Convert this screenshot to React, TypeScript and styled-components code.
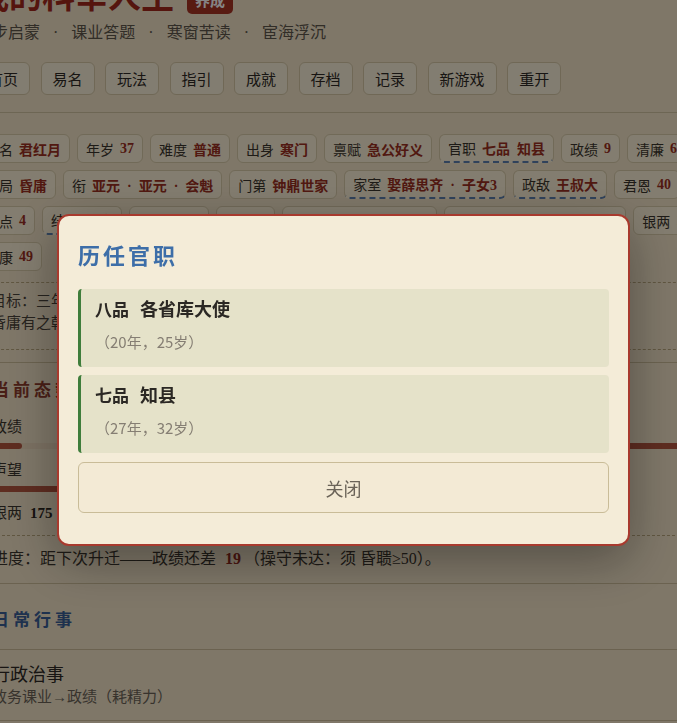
import styled, { createGlobalStyle } from 'styled-components';

const GlobalStyle = createGlobalStyle`
  html, body {
    margin: 0;
    padding: 0;
    overflow: hidden;
    background: #f3e4c8;
  }
  body {
    font-family: "Liberation Serif", "Noto Sans CJK SC", serif;
    color: #2e2a25;
  }
  * { box-sizing: border-box; }
`;

const Main = styled.main`
  width: 740px;
  margin: -23px 0 0 -24px;
`;

const TitleRow = styled.div`
  display: flex;
  align-items: center;
  height: 40px;
`;

const Title = styled.h1`
  margin: 0;
  font-size: 33px;
  line-height: 40px;
  font-weight: 700;
  color: #a4291c;
`;

const Badge = styled.span`
  margin-left: 13px;
  padding: 0 8px;
  height: 26px;
  line-height: 26px;
  border-radius: 5px;
  background: #a93424;
  color: #fff;
  font-size: 15px;
  font-weight: 700;
  transform: translateY(4px);
`;

const Subtitle = styled.div`
  margin-top: 5px;
  display: flex;
  align-items: center;
  font-size: 16px;
  line-height: 22px;
  color: #5e564b;
`;

const Dot = styled.span`
  margin: 0 13px;
`;

const Nav = styled.nav`
  display: flex;
  gap: 10.5px;
  margin-top: 18px;
  padding-bottom: 17px;
  border-bottom: 1px solid #d2c3a2;
`;

const NavButton = styled.button`
  height: 33px;
  padding: 0 11px;
  border: 1px solid #d6c8a6;
  border-radius: 6px;
  background: #f9efd9;
  font: inherit;
  font-size: 15px;
  color: #2e2a25;
`;

const Stats = styled.div`
  display: flex;
  flex-direction: column;
  gap: 7px;
  margin-top: 21px;
`;

const StatRow = styled.div`
  display: flex;
  gap: 7px;
  white-space: pre;
`;

const Chip = styled.div<{ $linked?: boolean }>`
  display: flex;
  align-items: center;
  gap: 6px;
  height: 29px;
  padding: 0 8px;
  border: 1px solid #d9cba9;
  border-bottom: ${(p) => (p.$linked ? '2px dashed #5c7fae' : '1px solid #d9cba9')};
  border-radius: 6px;
  background: #fcf0d6;
  font-size: 14px;
  color: #3b352d;
`;

const ChipValue = styled.b`
  color: #9b2f21;
  font-weight: 700;
`;

const Goal = styled.div`
  margin-top: 11px;
  padding: 7px 15px 15px;
  border-top: 1px dashed #b9a67d;
  border-bottom: 1px dashed #b9a67d;
  font-size: 15px;
  line-height: 22px;
  color: #4a433a;
  white-space: nowrap;
`;

const Section = styled.section<{ $flush?: boolean }>`
  margin-top: ${(p) => (p.$flush ? '0' : '12px')};
  padding: 0 16px;
  border-top: 1px solid #cdbd99;
`;

const SectionHead = styled.h2<{ $tone: string; $space: number }>`
  margin: 0;
  padding-top: ${(p) => p.$space}px;
  font-size: 17px;
  line-height: 24px;
  font-weight: 700;
  letter-spacing: 4px;
  color: ${(p) => p.$tone};
`;

const MeterGrid = styled.div`
  display: grid;
  grid-template-columns: 330px 1fr;
  column-gap: 24px;
  margin-top: 14px;
`;

const Meter = styled.div`
  margin-bottom: 11px;
`;

const MeterLabel = styled.div`
  font-size: 15px;
  line-height: 20px;
  color: #3b352d;
`;

const Track = styled.div`
  margin-top: 6px;
  height: 6px;
  border-radius: 3px;
  background: rgba(160, 90, 60, 0.08);
  overflow: hidden;
`;

const Fill = styled.div`
  height: 100%;
  border-radius: 3px;
  background: #b4563f;
`;

const Money = styled.div`
  padding-bottom: 12px;
  border-bottom: 1px dashed #b9a67d;
  font-size: 15px;
  line-height: 20px;
  color: #3b352d;

  b {
    margin-left: 8px;
    font-size: 15px;
    color: #2a241d;
  }
`;

const Progress = styled.p`
  margin: 11px 0 0;
  padding-bottom: 12px;
  font-size: 16px;
  line-height: 24px;
  color: #3b352d;

  b {
    margin: 0 3px 0 9px;
    color: #8f2a1d;
  }
`;

const HeadBar = styled.div`
  padding-bottom: 16px;
  border-bottom: 1px solid #cdbd99;
`;

const Action = styled.div`
  padding: 13px 0 13px;
  border-bottom: 1px solid #cdbd99;
`;

const ActionName = styled.div`
  font-size: 18px;
  line-height: 24px;
  color: #2e2a25;
`;

const ActionNote = styled.div`
  font-size: 15px;
  line-height: 20px;
  color: #6b6357;
`;

const Overlay = styled.div`
  position: fixed;
  inset: 0;
  display: flex;
  justify-content: center;
  align-items: flex-start;
  padding: 214px 0 0 10px;
  background: rgba(0, 0, 0, 0.48);
`;

const Dialog = styled.div`
  width: 573px;
  padding: 26px 19px 31px;
  border: 2px solid #a83a2e;
  border-radius: 12px;
  background: #f4ecd8;
  box-shadow: 0 14px 50px rgba(0, 0, 0, 0.35);
`;

const DialogTitle = styled.h3`
  margin: 0 0 17px;
  font-size: 22px;
  line-height: 30px;
  font-weight: 700;
  letter-spacing: 3px;
  color: #3d6ea8;
`;

const PostList = styled.div`
  display: flex;
  flex-direction: column;
  gap: 8px;
`;

const Post = styled.div`
  padding: 9px 14px 14px;
  border-left: 3px solid #3f7d3b;
  border-radius: 4px;
  background: #e5e2c9;
`;

const PostName = styled.div`
  font-size: 17px;
  line-height: 24px;
  font-weight: 700;
  color: #2b2824;

  span {
    margin-left: 11px;
    font-size: 18px;
  }
`;

const PostWhen = styled.div`
  margin-top: 8px;
  font-family: "Noto Sans CJK SC", sans-serif;
  font-weight: 400;
  font-size: 15px;
  line-height: 22px;
  color: #857e73;
`;

const CloseButton = styled.button`
  display: block;
  width: 100%;
  height: 51px;
  margin-top: 9px;
  border: 1px solid #c9bc98;
  border-radius: 6px;
  background: #f3ead5;
  font: inherit;
  font-size: 18px;
  color: #6a6358;
`;

type Stat = { label: string; value: string; linked?: boolean };

const SEP = '\u2002·\u2002';

const statRows: Stat[][] = [
  [
    { label: '姓名', value: '君红月' },
    { label: '年岁', value: '37' },
    { label: '难度', value: '普通' },
    { label: '出身', value: '寒门' },
    { label: '禀赋', value: '急公好义' },
    { label: '官职', value: '七品\u2002知县', linked: true },
    { label: '政绩', value: '9' },
    { label: '清廉', value: '61' },
  ],
  [
    { label: '布局', value: '昏庸' },
    { label: '衔', value: `亚元${SEP}亚元${SEP}会魁` },
    { label: '门第', value: '钟鼎世家' },
    { label: '家室', value: `娶薛思齐${SEP}子女3`, linked: true },
    { label: '政敌', value: '王叔大', linked: true },
    { label: '君恩', value: '40' },
  ],
  [
    { label: '功点', value: '4' },
    { label: '结交', value: '同窗', linked: true },
    { label: '师承', value: '无门' },
    { label: '操守', value: '8' },
    { label: '座师', value: `礼部侍郎${SEP}李公` },
    { label: '派系', value: `清流${SEP}东林书院旧党` },
    { label: '银两', value: '175' },
  ],
  [{ label: '健康', value: '49' }],
];

const meters = [
  { label: '政绩', pct: 9 },
  { label: '清廉', pct: 100 },
  { label: '声望', pct: 40 },
];

const posts = [
  { rank: '八品', post: '各省库大使', when: '（20年，25岁）' },
  { rank: '七品', post: '知县', when: '（27年，32岁）' },
];

const navItems = ['首页', '易名', '玩法', '指引', '成就', '存档', '记录', '新游戏', '重开'];
const stages = ['初步启蒙', '课业答题', '寒窗苦读', '宦海浮沉'];

export default function App() {
  return (
    <>
      <GlobalStyle />
      <Main>
        <TitleRow>
          <Title>我的科举人生</Title>
          <Badge>养成</Badge>
        </TitleRow>
        <Subtitle>
          {stages.map((s, i) => (
            <span key={s}>
              {i > 0 && <Dot>·</Dot>}
              {s}
            </span>
          ))}
        </Subtitle>
        <Nav>
          {navItems.map((n) => (
            <NavButton key={n}>{n}</NavButton>
          ))}
        </Nav>

        <Stats>
          {statRows.map((row, r) => (
            <StatRow key={r}>
              {row.map((s) => (
                <Chip key={s.label} $linked={s.linked}>
                  {s.label}
                  <ChipValue>{s.value}</ChipValue>
                </Chip>
              ))}
            </StatRow>
          ))}
        </Stats>

        <Goal>
          目标：三年一考，九年通考，政绩卓著者方得升迁，然清廉与操守——
          <br />
          昏庸有之朝须留意风评，勿使言官参劾。
        </Goal>

        <Section>
          <SectionHead $tone="#8d3b2b" $space={16}>当前态势</SectionHead>
          <MeterGrid>
            {meters.map((m) => (
              <Meter key={m.label}>
                <MeterLabel>{m.label}</MeterLabel>
                <Track>
                  <Fill style={{ width: `${m.pct}%` }} />
                </Track>
              </Meter>
            ))}
          </MeterGrid>
          <Money>
            银两<b>175</b>
          </Money>
          <Progress>
            进度：距下次升迁——政绩还差<b>19</b>（操守未达：须 昏聩≥50）。
          </Progress>
        </Section>

        <Section $flush>
          <HeadBar>
            <SectionHead $tone="#3a5f96" $space={25}>日常行事</SectionHead>
          </HeadBar>
          <Action>
            <ActionName>行政治事</ActionName>
            <ActionNote>政务课业→政绩（耗精力）</ActionNote>
          </Action>
        </Section>
      </Main>

      <Overlay>
        <Dialog>
          <DialogTitle>历任官职</DialogTitle>
          <PostList>
            {posts.map((p) => (
              <Post key={p.rank}>
                <PostName>
                  {p.rank}
                  <span>{p.post}</span>
                </PostName>
                <PostWhen>{p.when}</PostWhen>
              </Post>
            ))}
          </PostList>
          <CloseButton>关闭</CloseButton>
        </Dialog>
      </Overlay>
    </>
  );
}
